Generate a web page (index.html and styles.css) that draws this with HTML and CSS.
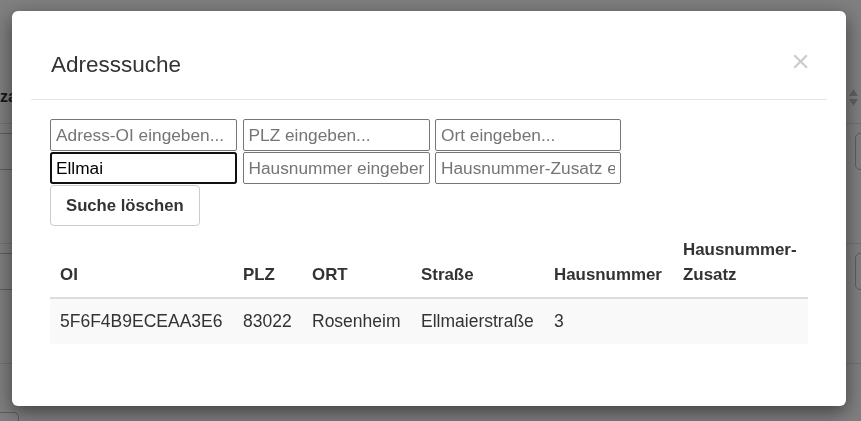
FILE: index.html
```html
<!DOCTYPE html>
<html lang="de">
<head>
<meta charset="utf-8">
<title>Adresssuche</title>
<link rel="stylesheet" href="styles.css">
</head>
<body>
<div class="page">
  <div class="page-top">
    <span class="page-label">za</span>
    <svg class="sort-icon" width="9" height="17" viewBox="0 0 9 17" aria-hidden="true"><path d="M4.5 0 L9 7 H0 Z M0 10 H9 L4.5 17 Z" fill="#c4c4c4"/></svg>
  </div>
  <div class="page-row"><div class="box box-left"></div><div class="box box-right"></div></div>
  <div class="page-row"><div class="box box-left"></div><div class="box box-right"></div></div>
  <div class="page-row page-row-last"><div class="box box-small"></div></div>
</div>
<div class="backdrop"></div>
<div class="modal" role="dialog">
  <div class="modal-header">
    <h4 class="modal-title">Adresssuche</h4>
    <button class="close" type="button" aria-label="Schließen">×</button>
  </div>
  <div class="modal-body">
    <div class="search-grid">
      <input class="search-input" type="text" placeholder="Adress-OI eingeben...">
      <input class="search-input" type="text" placeholder="PLZ eingeben...">
      <input class="search-input" type="text" placeholder="Ort eingeben...">
      <input class="search-input is-focused" type="text" value="Ellmai" placeholder="Straße eingeben...">
      <input class="search-input" type="text" placeholder="Hausnummer eingeben...">
      <input class="search-input" type="text" placeholder="Hausnummer-Zusatz eingeben...">
    </div>
    <button class="btn" type="button">Suche löschen</button>
    <table class="result-table">
      <colgroup>
        <col class="col-oi"><col class="col-plz"><col class="col-ort"><col class="col-str"><col class="col-hnr"><col class="col-zus">
      </colgroup>
      <thead>
        <tr><th>OI</th><th>PLZ</th><th>ORT</th><th>Straße</th><th>Hausnummer</th><th>Hausnummer-Zusatz</th></tr>
      </thead>
      <tbody>
        <tr><td>5F6F4B9ECEAA3E6</td><td>83022</td><td>Rosenheim</td><td>Ellmaierstraße</td><td>3</td><td></td></tr>
      </tbody>
    </table>
  </div>
</div>
</body>
</html>
```

FILE: styles.css
```css
* { box-sizing: border-box; }
html, body { margin: 0; height: 100%; }
body {
  font-family: "Liberation Sans", Arial, sans-serif;
  font-size: 17.5px;
  line-height: 25px;
  color: #333;
  background: #fff;
  overflow: hidden;
}

/* underlying page */
.page {
  display: flex;
  flex-direction: column;
  height: 100%;
  overflow: hidden;
}
.page-top {
  flex: none;
  height: 123px;
  display: flex;
  justify-content: space-between;
  align-items: flex-start;
  padding: 87px 3px 0 0;
}
.page-label { font-size: 16px; line-height: 20px; font-weight: bold; color: #333; }
.sort-icon { margin-top: 2px; }
.page-row {
  flex: none;
  height: 120px;
  border-top: 1px solid #e2e2e2;
  display: flex;
  justify-content: space-between;
  align-items: flex-start;
  padding-top: 9px;
}
.page-row-last { padding-top: 48px; }
.box { flex: none; height: 37px; border: 1px solid #bdbdbd; border-radius: 5px; background: #fff; }
.box-left { width: 300px; margin-left: -120px; }
.box-right { width: 60px; margin-right: -54px; }
.box-small { width: 100px; margin-left: -81px; }

/* backdrop + modal */
.backdrop { position: fixed; inset: 0; background: rgba(0, 0, 0, 0.5); }
.modal {
  position: fixed;
  left: 12px;
  top: 11px;
  width: 834px;
  height: 395px;
  background: #fff;
  border-radius: 6px;
  padding: 19px;
  box-shadow: 0 6px 19px rgba(0, 0, 0, 0.5);
}
.modal-header {
  display: flex;
  justify-content: space-between;
  align-items: flex-start;
  padding: 19px 20px 18px;
  border-bottom: 1px solid #e5e5e5;
}
.modal-title { margin: 0; font-size: 22.5px; line-height: 32px; font-weight: normal; color: #333; }
.close {
  margin: -4px -3px 0 0;
  padding: 0;
  border: 0;
  background: none;
  font-family: "Liberation Sans", Arial, sans-serif;
  font-size: 32px;
  line-height: 1;
  font-weight: normal;
  color: #000;
  opacity: 0.2;
  cursor: pointer;
}
.modal-body { padding: 19px; }

.search-grid {
  display: grid;
  grid-template-columns: 187px 187px 186px;
  column-gap: 5.5px;
  row-gap: 1px;
}
.search-input {
  height: 32px;
  width: 100%;
  margin: 0;
  padding: 1px 5px;
  border: 1px solid #767676;
  border-radius: 2px;
  font-family: "Liberation Sans", Arial, sans-serif;
  font-size: 17.3px;
  color: #000;
  background: #fff;
}
.search-input::placeholder { color: #757575; }
.search-input.is-focused { outline: 2px solid #101010; outline-offset: -2px; border-radius: 3px; }

.btn {
  display: block;
  margin-top: 1px;
  padding: 7px 15px;
  border: 1px solid #ccc;
  border-radius: 4px;
  background: #fff;
  font-family: "Liberation Sans", Arial, sans-serif;
  font-size: 16.7px;
  line-height: 25px;
  font-weight: bold;
  color: #333;
}

.result-table {
  width: 100%;
  margin-top: 1px;
  table-layout: fixed;
  border-collapse: collapse;
}
.col-oi { width: 183px; }
.col-plz { width: 69px; }
.col-ort { width: 109px; }
.col-str { width: 133px; }
.col-hnr { width: 129px; }
.col-zus { width: 135px; }
.result-table th {
  padding: 10px;
  text-align: left;
  vertical-align: bottom;
  font-size: 16.9px;
  font-weight: bold;
  border-bottom: 2px solid #ddd;
}
.result-table td {
  padding: 10px;
  vertical-align: top;
  background: #f9f9f9;
}
```
